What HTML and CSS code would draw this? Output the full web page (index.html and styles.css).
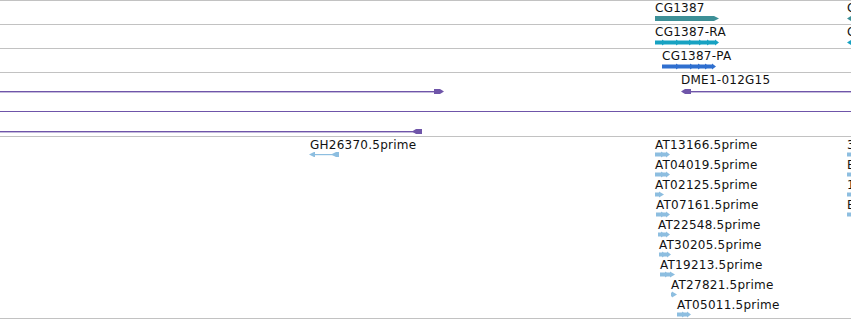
FILE: index.html
```html
<!DOCTYPE html>
<html lang="en">
<head>
    <meta charset="UTF-8">
    <link rel="stylesheet" href="styles.css">
    <title>Tracks</title>
</head>
<body>
<div class="tracks">

    <!-- gene -->
    <div class="track t-short">
        <span class="label" style="left:655px;top:1px">CG1387</span>
        <svg class="glyph" style="left:655px;top:14px" width="66" height="7">
            <polygon points="0,1 59,1 64,3.5 59,6 0,6" fill="#3d9097"/>
        </svg>
        <span class="label" style="left:847px;top:1px">CG1388</span>
        <svg class="glyph" style="left:847px;top:14px" width="10" height="7">
            <polygon points="0,3.5 4,1 10,1 10,6 4,6" fill="#3d9097"/>
        </svg>
    </div>

    <!-- transcripts -->
    <div class="track t-short">
        <span class="label" style="left:655px;top:1px">CG1387-RA</span>
        <svg class="glyph" style="left:655px;top:14px" width="66" height="7">
            <g fill="#17a2c2">
                <rect x="0" y="1.5" width="60" height="4"/>
                <polygon points="7,0.5 11,3.5 7,6.5"/>
                <polygon points="21,0.5 25,3.5 21,6.5"/>
                <polygon points="34,0.5 38,3.5 34,6.5"/>
                <polygon points="44,0.5 48,3.5 44,6.5"/>
                <polygon points="52,0.5 56,3.5 52,6.5"/>
                <polygon points="60,0.5 64,3.5 60,6.5"/>
            </g>
        </svg>
        <span class="label" style="left:847px;top:1px">CG1388-RA</span>
        <svg class="glyph" style="left:847px;top:14px" width="10" height="7">
            <polygon points="0,3.5 4,1 10,1 10,6 4,6" fill="#17a2c2"/>
        </svg>
    </div>

    <!-- cDNA -->
    <div class="track t-short">
        <span class="label" style="left:662px;top:1px">CG1387-PA</span>
        <svg class="glyph" style="left:662px;top:14px" width="56" height="7">
            <g fill="#2f6fcf">
                <rect x="0" y="1.5" width="50" height="4"/>
                <polygon points="14,0.5 18,3.5 14,6.5"/>
                <polygon points="28,0.5 32,3.5 28,6.5"/>
                <polygon points="36,0.5 40,3.5 36,6.5"/>
                <polygon points="43,0.5 47,3.5 43,6.5"/>
                <polygon points="50,0.5 54,3.5 50,6.5"/>
            </g>
        </svg>
    </div>

    <!-- BACs -->
    <div class="track t-bac">
        <svg class="glyph" style="left:0;top:15px" width="446" height="7">
            <g fill="#6f55a9">
                <rect x="0" y="3" width="436" height="1.4"/>
                <polygon points="434,1 440,1 444,3.5 440,6 434,6"/>
            </g>
        </svg>
        <span class="label" style="left:681px;top:1px">DME1-012G15</span>
        <svg class="glyph" style="left:680px;top:15px" width="171" height="7">
            <g fill="#6f55a9">
                <rect x="6" y="3" width="165" height="1.4"/>
                <polygon points="1,3.5 5,1 11,1 11,6 5,6"/>
            </g>
        </svg>
        <div class="bac-line" style="top:38px"></div>
        <svg class="glyph" style="left:0;top:55px" width="424" height="7">
            <g fill="#6f55a9">
                <rect x="0" y="3" width="418" height="1.4"/>
                <polygon points="412,3.5 416,1 422,1 422,6 416,6"/>
            </g>
        </svg>
    </div>

    <!-- 5prime ESTs -->
    <div class="track t-est">
        <span class="label" style="left:310px;top:2px">GH26370.5prime</span>
        <svg class="glyph" style="left:309px;top:14px" width="32" height="7">
            <g fill="#8dbee0">
                <rect x="3" y="3" width="27" height="1.2"/>
                <polygon points="0,3.5 5,1 6,1 6,6 5,6"/>
                <polygon points="22,3.5 27,1 30,1 30,6 27,6"/>
            </g>
        </svg>

        <span class="label" style="left:655px;top:2px">AT13166.5prime</span>
        <svg class="glyph est" style="left:655px;top:14px" width="16" height="7">
            <rect x="0" y="1.5" width="11" height="4"/><polygon points="6,0.5 10,3.5 6,6.5"/><polygon points="11,0.5 15,3.5 11,6.5"/>
        </svg>
        <span class="label" style="left:655px;top:22px">AT04019.5prime</span>
        <svg class="glyph est" style="left:655px;top:34px" width="16" height="7">
            <rect x="0" y="1.5" width="11" height="4"/><polygon points="6,0.5 10,3.5 6,6.5"/><polygon points="11,0.5 15,3.5 11,6.5"/>
        </svg>
        <span class="label" style="left:655px;top:42px">AT02125.5prime</span>
        <svg class="glyph est" style="left:655px;top:54px" width="10" height="7">
            <rect x="0" y="1.5" width="5" height="4"/><polygon points="4,0.5 9,3.5 4,6.5"/>
        </svg>
        <span class="label" style="left:656px;top:62px">AT07161.5prime</span>
        <svg class="glyph est" style="left:656px;top:74px" width="16" height="7">
            <rect x="0" y="1.5" width="10" height="4"/><polygon points="5,0.5 9,3.5 5,6.5"/><polygon points="10,0.5 14,3.5 10,6.5"/>
        </svg>
        <span class="label" style="left:658px;top:82px">AT22548.5prime</span>
        <svg class="glyph est" style="left:658px;top:94px" width="14" height="7">
            <rect x="0" y="1.5" width="8" height="4"/><polygon points="3,0.5 7,3.5 3,6.5"/><polygon points="8,0.5 12,3.5 8,6.5"/>
        </svg>
        <span class="label" style="left:659px;top:102px">AT30205.5prime</span>
        <svg class="glyph est" style="left:659px;top:114px" width="14" height="7">
            <rect x="0" y="1.5" width="8" height="4"/><polygon points="3,0.5 7,3.5 3,6.5"/><polygon points="8,0.5 12,3.5 8,6.5"/>
        </svg>
        <span class="label" style="left:660px;top:122px">AT19213.5prime</span>
        <svg class="glyph est" style="left:660px;top:134px" width="16" height="7">
            <rect x="0" y="1.5" width="10" height="4"/><polygon points="5,0.5 9,3.5 5,6.5"/><polygon points="10,0.5 15,3.5 10,6.5"/>
        </svg>
        <span class="label" style="left:671px;top:142px">AT27821.5prime</span>
        <svg class="glyph est" style="left:671px;top:154px" width="8" height="7">
            <rect x="0" y="1.5" width="2" height="4"/><polygon points="1,0.5 6,3.5 1,6.5"/>
        </svg>
        <span class="label" style="left:677px;top:162px">AT05011.5prime</span>
        <svg class="glyph est" style="left:677px;top:174px" width="16" height="7">
            <rect x="0" y="1.5" width="10" height="4"/><polygon points="5,0.5 9,3.5 5,6.5"/><polygon points="10,0.5 14,3.5 10,6.5"/>
        </svg>

        <span class="label" style="left:847px;top:2px">3R</span>
        <svg class="glyph est" style="left:847px;top:14px" width="6" height="7"><rect x="0" y="1.5" width="6" height="4"/></svg>
        <span class="label" style="left:847px;top:22px">EST</span>
        <svg class="glyph est" style="left:847px;top:34px" width="6" height="7"><rect x="0" y="1.5" width="6" height="4"/></svg>
        <span class="label" style="left:847px;top:42px">1:</span>
        <svg class="glyph est" style="left:847px;top:54px" width="6" height="7"><rect x="0" y="1.5" width="6" height="4"/></svg>
        <span class="label" style="left:847px;top:62px">EST</span>
        <svg class="glyph est" style="left:847px;top:74px" width="6" height="7"><rect x="0" y="1.5" width="6" height="4"/></svg>
    </div>

    <div class="track t-end"></div>
</div>
</body>
</html>
```

FILE: styles.css
```css
body {
    margin: 0;
    background-color: #ffffff;
    font-family: "DejaVu Sans", sans-serif;
    overflow: hidden;
}
.tracks {
    width: 851px;
    height: 320px;
    overflow: hidden;
}
.track {
    position: relative;
    box-sizing: border-box;
    border-top: 1px solid #c2c2c2;
    overflow: hidden;
}
.t-short {
    height: 24px;
}
.t-bac {
    height: 64px;
}
.t-est {
    height: 182px;
}
.t-end {
    height: 2px;
}
.label {
    position: absolute;
    font-size: 12px;
    line-height: 12px;
    letter-spacing: 0.25px;
    color: #111111;
    white-space: nowrap;
}
.glyph {
    position: absolute;
    display: block;
}
.est {
    fill: #8dbee0;
}
.bac-line {
    position: absolute;
    left: 0;
    width: 100%;
    height: 1px;
    background-color: #6f55a9;
}
```
